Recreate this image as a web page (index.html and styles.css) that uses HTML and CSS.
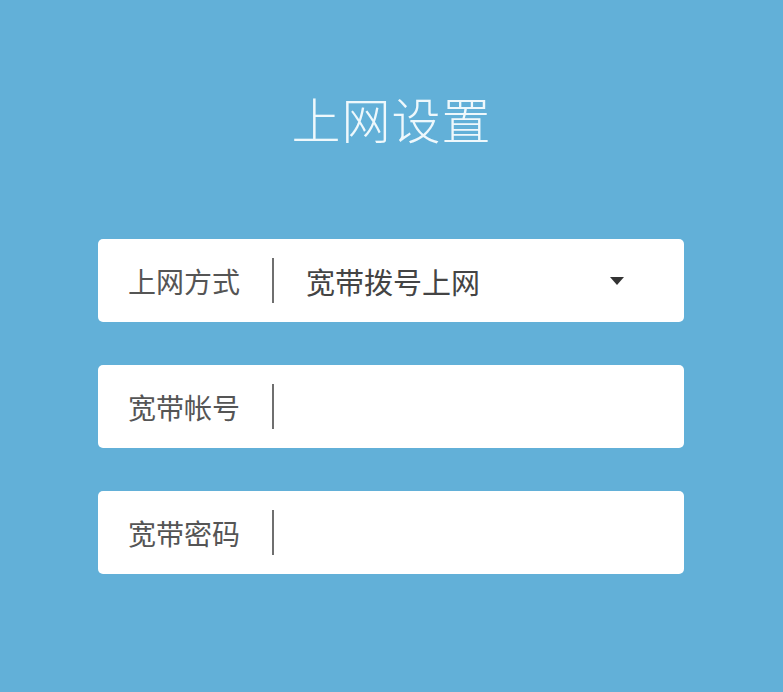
FILE: index.html
```html
<!DOCTYPE html>
<html lang="zh-CN">
<head>
  <meta charset="UTF-8">
  <meta name="viewport" content="width=device-width, initial-scale=1.0">
  <title>上网设置</title>
  <link rel="stylesheet" href="styles.css">
</head>
<body>
  <div class="setup">
    <h1 class="setup-title">上网设置</h1>
    <form class="setup-form">
      <div class="field">
        <span class="field-label">上网方式</span>
        <span class="field-sep"></span>
        <span class="field-value">宽带拨号上网</span>
        <span class="field-caret"></span>
      </div>
      <div class="field">
        <span class="field-label">宽带帐号</span>
        <span class="field-sep"></span>
        <input class="field-input" type="text">
      </div>
      <div class="field">
        <span class="field-label">宽带密码</span>
        <span class="field-sep"></span>
        <input class="field-input" type="password">
      </div>
    </form>
  </div>
</body>
</html>
```

FILE: styles.css
```css
/* Reset and base styling */
* { box-sizing: border-box; margin: 0; padding: 0; }
html, body { height: 100%; }
body {
  font-family: "Noto Sans CJK SC", "Noto Sans", sans-serif;
  background: #62b0d8;
}
.setup {
  padding-top: 84px;
}
.setup-title {
  text-align: center;
  font-size: 49px;
  font-weight: 300;
  color: #eef8fc;
  line-height: 68px;
  letter-spacing: 1px;
}
.setup-form {
  width: 586px;
  margin: 87px 0 0 98px;
  display: flex;
  flex-direction: column;
  gap: 43px;
}
.field {
  display: flex;
  align-items: center;
  height: 83px;
  background: #fff;
  border-radius: 5px;
  padding: 0 30px;
}
.field-label {
  font-size: 28px;
  color: #555;
  width: 144px;
  flex: none;
}
.field-sep {
  width: 2px;
  height: 45px;
  background: #6f6f6f;
  flex: none;
}
.field-value {
  font-size: 29px;
  color: #444;
  margin-left: 32px;
  flex: 1;
}
.field-caret {
  width: 0;
  height: 0;
  border-left: 7px solid transparent;
  border-right: 7px solid transparent;
  border-top: 8px solid #333;
  margin-right: 30px;
}
.field-input {
  flex: 1;
  border: none;
  outline: none;
  background: transparent;
  font: inherit;
  font-size: 28px;
  margin-left: 32px;
}
```
